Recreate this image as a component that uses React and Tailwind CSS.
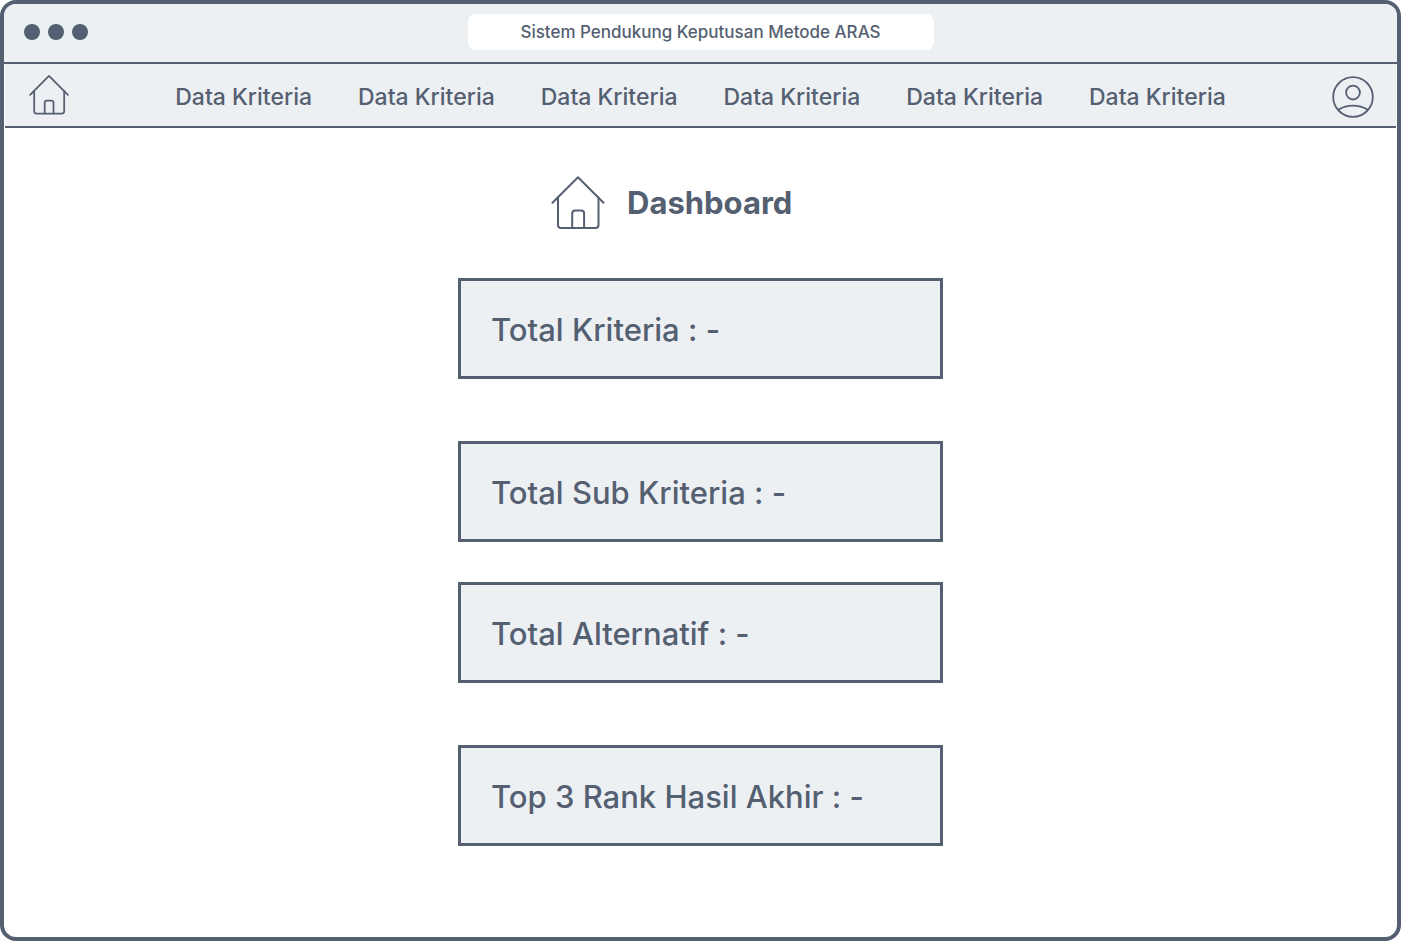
const navItems = [
  'Data Kriteria',
  'Data Kriteria',
  'Data Kriteria',
  'Data Kriteria',
  'Data Kriteria',
  'Data Kriteria',
];

const statGroups = [
  [
    { label: 'Total Kriteria', value: '-' },
    { label: 'Total Sub Kriteria', value: '-' },
  ],
  [
    { label: 'Total Alternatif', value: '-' },
    { label: 'Top 3 Rank Hasil Akhir', value: '-' },
  ],
];

function HomeIcon({ className, strokeWidth }) {
  return (
    <svg
      viewBox="0 0 54 54"
      fill="none"
      stroke="currentColor"
      strokeWidth={strokeWidth}
      strokeLinecap="round"
      strokeLinejoin="round"
      className={className}
      aria-hidden="true"
    >
      <path d="M1.5 26.8 27 1.3l25.5 25.5" />
      <path d="M7 21.5V49a3 3 0 0 0 3 3h34.5a3 3 0 0 0 3-3V21.5" />
      <path d="M21.2 52V37.6a3 3 0 0 1 3-3h5.9a3 3 0 0 1 3 3V52" />
    </svg>
  );
}

function UserIcon({ className }) {
  return (
    <svg
      viewBox="0 0 42 42"
      fill="none"
      stroke="currentColor"
      strokeWidth="1.8"
      strokeLinecap="round"
      className={className}
      aria-hidden="true"
    >
      <circle cx="21" cy="21" r="19.8" />
      <circle cx="21" cy="16.6" r="6.9" />
      <path d="M6.8 33.4C15 28.4 27 28.4 35.2 33.4" />
    </svg>
  );
}

function TitleBar() {
  return (
    <header className="grid grid-cols-[1fr_auto_1fr] items-center border-b-2 border-[#545f71] bg-[#edf0f3] px-5 pt-[10px] pb-3">
      <div className="flex gap-2">
        <span className="size-4 rounded-full bg-[#545f71]" />
        <span className="size-4 rounded-full bg-[#545f71]" />
        <span className="size-4 rounded-full bg-[#545f71]" />
      </div>
      <input
        type="text"
        aria-label="Address"
        defaultValue="Sistem Pendukung Keputusan Metode ARAS"
        className="h-9 w-[466px] rounded-lg bg-white text-center text-[17px] font-medium outline-none"
      />
    </header>
  );
}

function NavBar() {
  return (
    <nav className="mx-px flex h-16 items-center justify-between border-b-2 border-[#545f71] bg-[#edf0f3] pr-[22px] pl-6">
      <a href="#home" aria-label="Home">
        <HomeIcon className="size-10" strokeWidth="2.4" />
      </a>
      <ul className="flex gap-[46px] pt-1 text-[23px] leading-8 font-medium">
        {navItems.map((item, i) => (
          <li key={i}>
            <a href={`#data-${i + 1}`}>{item}</a>
          </li>
        ))}
      </ul>
      <button type="button" aria-label="Profile" className="pt-1">
        <UserIcon className="size-[42px]" />
      </button>
    </nav>
  );
}

function StatCard({ label, value }) {
  return (
    <div className="border-[3px] border-[#545f71] bg-[#edf0f3] px-[30px] pt-[29px] pb-[26px] text-[31px] leading-10 font-medium">
      {label} : {value}
    </div>
  );
}

export default function App() {
  return (
    <div className="flex min-h-screen flex-col overflow-hidden rounded-2xl border-4 border-[#545f71] bg-white font-['Inter',sans-serif] text-[#545f71]">
      <TitleBar />
      <NavBar />
      <main className="mx-auto w-full max-w-[485px] pt-12 pb-16">
        <h1 className="flex items-center gap-[22px] pl-[93px] text-[31px] leading-10 font-bold">
          <HomeIcon className="size-[54px]" strokeWidth="2" />
          Dashboard
        </h1>
        <div className="mt-12 flex flex-col gap-10">
          {statGroups.map((group, i) => (
            <section key={i} className="flex flex-col gap-[62px]">
              {group.map((stat) => (
                <StatCard key={stat.label} {...stat} />
              ))}
            </section>
          ))}
        </div>
      </main>
    </div>
  );
}
